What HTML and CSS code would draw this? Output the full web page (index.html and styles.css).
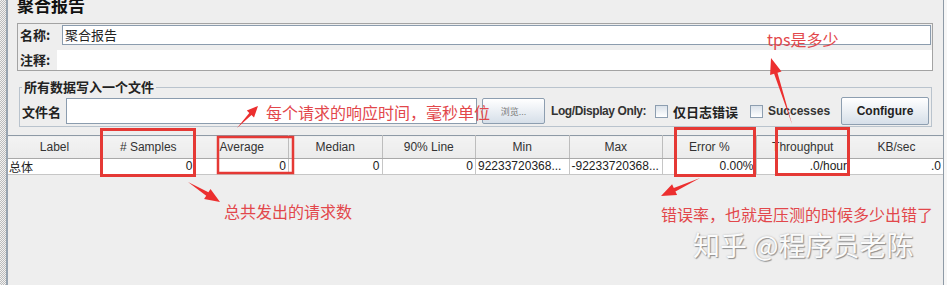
FILE: index.html
```html
<!DOCTYPE html>
<html lang="zh-CN">
<head>
    <meta charset="UTF-8">
    <meta name="viewport" content="width=device-width, initial-scale=1.0">
    <title>聚合报告</title>
    <link rel="stylesheet" href="styles.css">
</head>
<body>
    <div class="page">
        <div class="rail"></div>
        <div class="main">
            <h1 class="title">聚合报告</h1>

            <div class="name-box">
                <div class="name-row">
                    <span class="field-label">名称:</span>
                    <div class="name-input">聚合报告</div>
                </div>
                <div class="note-row">
                    <span class="field-label note-label">注释:</span>
                    <div class="note-input"></div>
                </div>
            </div>

            <fieldset class="file-box">
                <legend>所有数据写入一个文件</legend>
                <div class="file-row">
                    <span class="file-label">文件名</span>
                    <div class="file-input"></div>
                    <button class="btn browse">浏览...</button>
                    <span class="log-label">Log/Display Only:</span>
                    <span class="check"></span>
                    <span class="check-text errors-text">仅日志错误</span>
                    <span class="check"></span>
                    <span class="check-text success-text">Successes</span>
                    <button class="btn configure">Configure</button>
                </div>
            </fieldset>

            <table class="report">
                <thead>
                    <tr>
                        <th>Label</th>
                        <th># Samples</th>
                        <th>Average</th>
                        <th>Median</th>
                        <th>90% Line</th>
                        <th>Min</th>
                        <th>Max</th>
                        <th>Error %</th>
                        <th>Throughput</th>
                        <th>KB/sec</th>
                    </tr>
                </thead>
                <tbody>
                    <tr>
                        <td class="label-cell">总体</td>
                        <td>0</td>
                        <td>0</td>
                        <td>0</td>
                        <td>0</td>
                        <td class="clip">92233720368...</td>
                        <td class="clip">-92233720368...</td>
                        <td>0.00%</td>
                        <td>.0/hour</td>
                        <td>.0</td>
                    </tr>
                </tbody>
            </table>
        </div>
        <div class="edge"></div>
    </div>

    <!-- red annotations drawn over the screenshot -->
    <div class="notes">
        <svg class="marks" width="947" height="285" viewBox="0 0 947 285">
            <g fill="none" stroke="#e53935">
                <rect x="101.5" y="129.5" width="93" height="46" stroke-width="3"/>
                <rect x="218" y="137" width="75" height="36" stroke-width="2.5"/>
                <rect x="675.5" y="128.5" width="79" height="47" stroke-width="3"/>
                <rect x="776.5" y="128.5" width="72" height="46" stroke-width="3"/>
            </g>
            <g fill="#ec2f2f">
                <polygon points="237,128 251.5,114.9 254,117.4 258,106 246.8,110.5 249.3,112.9"/>
                <polygon points="188,182 206.2,195.7 204.1,199.1 220,202 210.5,188.9 208.4,192.3"/>
                <polygon points="700,178 673.8,187.9 672.1,184.3 661,196 677.1,195.1 675.4,191.5"/>
                <polygon points="792,124 777.5,72.7 781.5,71.4 771,58 770.1,75 774.1,73.7"/>
            </g>
        </svg>
        <div class="note note-tps">tps是多少</div>
        <div class="note note-avg">每个请求的响应时间，毫秒单位</div>
        <div class="note note-total">总共发出的请求数</div>
        <div class="note note-error">错误率，也就是压测的时候多少出错了</div>
        <div class="watermark">知乎 @程序员老陈</div>
    </div>
</body>
</html>
```

FILE: styles.css
```css
body {
    margin: 0;
    width: 947px;
    height: 285px;
    overflow: hidden;
    position: relative;
    background-color: #eeeeee;
    font-family: "Liberation Sans", "Noto Sans CJK SC", sans-serif;
    color: #222;
}
.page {
    display: flex;
    height: 285px;
}
.rail {
    width: 6px;
    border-right: 2px solid #98a4b0;
    background: repeating-conic-gradient(#bcbcbc 0 25%, #f2f2f2 0 50%) 0 0 / 2px 2px;
}
.main {
    width: 935px;
    border-right: 1px solid #8e9aa6;
    background-color: #eeeeee;
}
.edge {
    flex: 1;
    background-color: #f6f6f6;
}
.title {
    margin: -4px 0 0 9px;
    font-family: "Noto Sans CJK SC", sans-serif;
    font-size: 17px;
    line-height: 18px;
    font-weight: bold;
    color: #111;
}

/* name / comments */
.name-box {
    margin: 9px 10px 0 9px;
    border: 1px solid #a3a3a3;
}
.name-row, .note-row {
    display: flex;
    align-items: center;
}
.name-row {
    height: 22px;
}
.note-row {
    margin-top: 4px;
    height: 20px;
}
.field-label {
    width: 44px;
    padding-left: 2px;
    box-sizing: border-box;
    font-family: "Noto Sans CJK SC", sans-serif;
    font-size: 13px;
    font-weight: bold;
    line-height: 16px;
}
.note-label {
    width: 39px;
}
.name-input {
    flex: 1;
    height: 20px;
    margin-right: 1px;
    box-sizing: border-box;
    border: 1px solid #8b9cae;
    background-color: #fff;
    padding-left: 2px;
    font-family: "Noto Sans CJK SC", sans-serif;
    font-size: 13px;
    line-height: 17px;
}
.note-input {
    flex: 1;
    height: 20px;
    background-color: #fff;
}

/* write results to file */
.file-box {
    margin: 8px 11px 0 11px;
    padding: 0 2px 1px 2px;
    border: 1px solid #b9c3cd;
    min-width: 0;
}
.file-box legend {
    padding: 0 2px;
    font-family: "Noto Sans CJK SC", sans-serif;
    font-size: 13px;
    font-weight: bold;
    line-height: 16px;
}
.file-row {
    display: flex;
    align-items: center;
    height: 28px;
    margin-top: 2px;
}
.file-label {
    width: 44px;
    font-family: "Noto Sans CJK SC", sans-serif;
    font-size: 13px;
    font-weight: bold;
}
.file-input {
    width: 411px;
    height: 26px;
    box-sizing: border-box;
    border: 1px solid #8b9cae;
    background-color: #fff;
}
.btn {
    box-sizing: border-box;
    padding: 0;
    border: 1px solid #8d9eb0;
    border-radius: 2px;
    background: linear-gradient(#ffffff, #d6dfe9);
    font-family: "Liberation Sans", "Noto Sans CJK SC", sans-serif;
}
.browse {
    margin-left: 5px;
    width: 63px;
    height: 26px;
    font-size: 9px;
    color: #777;
}
.log-label {
    margin-left: 6px;
    width: 104px;
    font-size: 12px;
    font-weight: bold;
    letter-spacing: -0.4px;
    color: #333;
}
.check {
    width: 13px;
    height: 13px;
    box-sizing: border-box;
    border: 1px solid #8d9eb0;
    background: linear-gradient(#dbe2ea, #ffffff);
}
.check-text {
    margin-left: 5px;
    font-weight: bold;
    color: #222;
}
.errors-text {
    width: 77px;
    font-family: "Noto Sans CJK SC", sans-serif;
    font-size: 13px;
}
.success-text {
    width: 73px;
    font-size: 12px;
    color: #333;
}
.configure {
    width: 88px;
    height: 28px;
    font-size: 12px;
    font-weight: bold;
    color: #222;
}

/* aggregate table */
.report {
    width: 100%;
    margin-top: 8px;
    border-collapse: collapse;
    table-layout: fixed;
}
.report th {
    height: 22px;
    padding: 0;
    border-top: 1px solid #8e9aa6;
    border-right: 1px solid #bdbdbd;
    border-bottom: 1px solid #a9a9a9;
    background: linear-gradient(#f3f3f3, #ebebeb);
    font-size: 12px;
    font-weight: normal;
    color: #333;
}
.report td {
    height: 15px;
    padding: 0 2px 0 0;
    border-right: 1px solid #c6c6c6;
    border-bottom: 1px solid #c6c6c6;
    background-color: #fff;
    text-align: right;
    font-size: 12px;
    line-height: 15px;
    white-space: nowrap;
    overflow: hidden;
}
.report th:last-child, .report td:last-child {
    border-right: none;
}
.report .label-cell {
    text-align: left;
    padding-left: 1px;
    font-family: "Noto Sans CJK SC", sans-serif;
}
.report .clip {
    text-align: left;
    padding-left: 2px;
}

/* annotations */
.notes {
    position: absolute;
    left: 0;
    top: 0;
    width: 947px;
    height: 285px;
    pointer-events: none;
}
.marks {
    position: absolute;
    left: 0;
    top: 0;
}
.note {
    position: absolute;
    font-family: "Noto Sans CJK SC", sans-serif;
    font-size: 16px;
    line-height: 20px;
    color: #e2474b;
    white-space: nowrap;
}
.note-tps {
    left: 767px;
    top: 29px;
}
.note-avg {
    left: 266px;
    top: 102px;
}
.note-total {
    left: 224px;
    top: 201px;
}
.note-error {
    left: 661px;
    top: 204px;
}
.watermark {
    position: absolute;
    left: 693px;
    top: 229px;
    font-family: "Noto Sans CJK SC", sans-serif;
    font-size: 27px;
    line-height: 32px;
    color: #fbfbfb;
    white-space: nowrap;
    text-shadow: 1px 1px 1px #8f8f8f, 0 0 2px #b5b5b5;
}
```
